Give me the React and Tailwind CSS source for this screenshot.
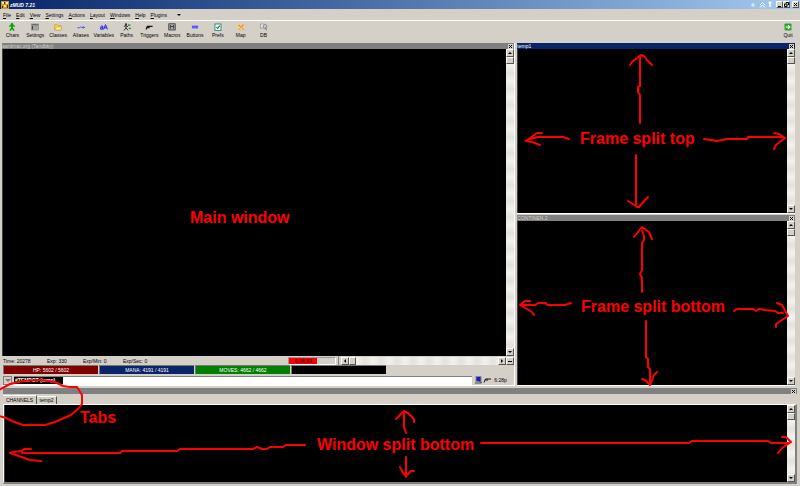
import React from "react";

const menus = ["File", "Edit", "View", "Settings", "Actions", "Layout", "Windows", "Help", "Plugins"];

function Glyph({ name }) {
  const common = { width: 8, height: 8, viewBox: "0 0 8 8", "aria-hidden": true };
  switch (name) {
    case "Chars":
      return (
        <svg {...common}>
          <circle cx="4" cy="1.2" r="1.2" fill="#00a000" />
          <path d="M1.2 3.4 4 2.4l2.8 1M4 2.4V5M4 4.6 2 7.6M4 4.6l2 3" stroke="#00a000" strokeWidth="1.5" fill="none" />
        </svg>
      );
    case "Settings":
      return (
        <svg {...common}>
          <rect x=".5" y="1" width="7" height="6" fill="#b4b4b4" stroke="#777" strokeWidth=".6" />
          <path d="M1 1.8h6" stroke="#555" />
          <path d="M1.6 3v3.4" stroke="#444" strokeWidth="1.2" />
          <path d="M3.6 3.6h3M3.6 5.3h3" stroke="#888" strokeWidth=".7" />
        </svg>
      );
    case "Classes":
      return (
        <svg {...common}>
          <path d="M.6 7V1.6h2.6l.8 1h3V7z" fill="#f4d84c" stroke="#b89a28" strokeWidth=".6" />
          <path d="M.8 7 2 4h5.8L6.8 7z" fill="#fff09a" stroke="#b89a28" strokeWidth=".5" />
        </svg>
      );
    case "Aliases":
      return (
        <svg {...common}>
          <path d="M.6 4.8h2M2.8 4.6c.4-1 1.6-1 1.8 0M5 4.4h2.4M6.4 3.4l1 1-1 1" stroke="#3b3bf0" strokeWidth=".9" fill="none" />
        </svg>
      );
    case "Variables":
      return (
        <svg {...common}>
          <path d="M.6 3.2h2.2v3H.6V4.6h2M3.6 6.4 5.5 1.6l1.9 4.8M4.3 4.8h2.4" stroke="#2020f0" strokeWidth="1" fill="none" />
        </svg>
      );
    case "Paths":
      return (
        <svg {...common}>
          <circle cx="3" cy="1.3" r="1" fill="#222" />
          <path d="M3 2v3L1 7.4M3 4.8l2 2.6M.8 3.4 3 2.6l2 1.2" stroke="#333" fill="none" />
          <path d="M5 2.2h2.4M5.8 5.4h2" stroke="#188018" strokeWidth="1.3" />
        </svg>
      );
    case "Triggers":
      return (
        <svg {...common}>
          <path d="M1 6.6 2.4 3.4h5.2M2.4 4.6h2.2" stroke="#151515" strokeWidth="1.2" fill="none" />
        </svg>
      );
    case "Macros":
      return (
        <svg {...common}>
          <rect x=".8" y=".8" width="6.4" height="6.2" fill="#aaa" stroke="#333" strokeWidth=".8" />
          <path d="M2.4 5.6V2.4L4 4l1.6-1.6v3.2" stroke="#222" strokeWidth=".8" fill="none" />
        </svg>
      );
    case "Buttons":
      return (
        <svg {...common}>
          <rect x="1" y="2.6" width="6" height="3" fill="#4040ee" stroke="#a8a8f8" strokeWidth=".6" />
          <path d="M2.4 4.1h3.2" stroke="#b8b8ff" strokeWidth=".6" />
        </svg>
      );
    case "Prefs":
      return (
        <svg {...common}>
          <rect x="1" y="1" width="6" height="6.4" fill="#fff" stroke="#2b7c8c" strokeWidth=".9" />
          <path d="M2.3 4 3.6 5.4 5.8 2.6" stroke="#109010" strokeWidth="1.1" fill="none" />
        </svg>
      );
    case "Map":
      return (
        <svg {...common}>
          <rect x=".6" y=".8" width="6.8" height="6.4" fill="#f1d28e" />
          <path d="M1 2.4h2v1.8h2.4V2H7M1.4 6.2h2M5 6.2h2" stroke="#dd8735" strokeWidth=".9" fill="none" />
        </svg>
      );
    case "DB":
      return (
        <svg {...common}>
          <rect x=".6" y="1" width="4" height="4" fill="#e8e8e8" stroke="#888" strokeWidth=".6" />
          <circle cx="5" cy="3.4" r="1.8" fill="#c9d7e4" stroke="#667" strokeWidth=".7" />
          <path d="m5.6 4.8.8 2.4" stroke="#667" />
        </svg>
      );
    default:
      return (
        <svg {...common}>
          <rect x=".5" y=".5" width="7" height="7" rx=".8" fill="#2ba52b" />
          <path d="M1.6 4h4M4 2.2 5.9 4 4 5.8" stroke="#fff" strokeWidth="1.1" fill="none" />
        </svg>
      );
  }
}

const tools = ["Chars", "Settings", "Classes", "Aliases", "Variables", "Paths", "Triggers", "Macros", "Buttons", "Prefs", "Map", "DB"];

function Tool({ name }) {
  return (
    <button className="flex min-w-0 flex-1 flex-col items-center">
      <Glyph name={name} />
      <span className="leading-[8px]">{name}</span>
    </button>
  );
}

const raised = "border border-t-white border-l-white border-r-[#555] border-b-[#555] bg-[#d4d0c8]";

function Arrow({ d, label }) {
  return (
    <button aria-label={label} className={`flex h-2 w-2 shrink-0 items-center justify-center ${raised}`}>
      <svg width="4" height="4" viewBox="0 0 4 4" aria-hidden="true"><path d={d} fill="#000" /></svg>
    </button>
  );
}

function VScroll() {
  return (
    <div className="flex w-2 shrink-0 flex-col bg-[repeating-linear-gradient(180deg,#f3f2ef_0px,#e4e1dc_8px,#f3f2ef_16px)]">
      <Arrow label="Scroll up" d="M0 3h4L2 1z" />
      <div className={`h-[7px] ${raised}`} />
      <div className="flex-1" />
      <Arrow label="Scroll down" d="M0 1h4L2 3z" />
    </div>
  );
}

function CloseBox() {
  return (
    <button aria-label="Close" className="flex h-[5px] w-[5px] shrink-0 items-center justify-center bg-[#d4d0c8]">
      <svg width="5" height="5" viewBox="0 0 5 5" aria-hidden="true"><path d="M1 1l3 3M4 1 1 4" stroke="#000" /></svg>
    </button>
  );
}

function PaneTitle({ text, tone }) {
  return (
    <div className={`flex h-[6px] shrink-0 items-center justify-between pr-px leading-[6px] ${tone}`}>
      <span>{text}</span>
      <CloseBox />
    </div>
  );
}

function Frame({ title, tone }) {
  return (
    <section className="flex flex-1 flex-col border-b border-white">
      <PaneTitle text={title} tone={tone} />
      <div className="flex flex-1">
        <div className="flex-1 border-l border-[#404040] bg-black" />
        <VScroll />
      </div>
    </section>
  );
}

function Gauge({ color, text }) {
  return (
    <div className={`flex h-[9px] w-[95px] items-center justify-center border-t border-l border-[#777] text-white ${color}`}>{text}</div>
  );
}

const strokes = [
  // upper frame
  "M569 139 563 137H538L530 139 526 141M542 133H537L530 138 526 141 532 142 540 145",
  "M704 139 717 141 727 139H747L748 137H783M774 133 779 134 785 138 776 145 774 149",
  "M640 123V95L638 92V87L640 86V56M630 65 632 62 641 55 644 56 647 60 652 65",
  "M636 155V204M628 201 633 204 637 207H639L645 200 648 197",
  // lower frame
  "M571 303 565 305H547L546 303H538L535 305H520M530 301H525L520 305 532 312 534 315",
  "M734 311 737 309H753L756 311 759 309 765 310 775 311 778 313H783M777 303 782 305 788 316 776 324V327",
  "M642 292V278L640 274 642 270V243L644 240V236L642 231M634 237 642 227 649 232 652 239",
  "M646 321V357L648 359V367L650 369V383M642 379 645 380 650 385 654 375 657 372",
  // bottom window
  "M31 449H24L22 451 13 452 10 453 30 460 41 461M22 453H120L122 451H177L180 449H253L257 447 262 449H267L270 447H283L286 445H305",
  "M406 433 404 427V413M396 419 404 411 408 413 414 419V422",
  "M406 457V477M400 467 403 473 406 476 411 471H414",
  "M481 443H689L692 441H768L771 443H788M782 437H786L791 442 782 448 778 453",
  // loop round the tabs
  "M-1 390 10 384 23 381 40 380 55 382 63 386 70 387H77L82 395V404L78 409 71 415 55 422 45 425H23L12 421 6 418-1 416",
];

function Annotations() {
  return (
    <svg viewBox="0 0 800 486" className="pointer-events-none absolute inset-0 h-full w-full">
      <g fill="none" stroke="#f00" strokeWidth="2" strokeLinejoin="round" strokeLinecap="round">
        {strokes.map((d) => <path key={d} d={d} />)}
      </g>
      <g fill="#f00" className="text-[16px] font-bold">
        <text x="190" y="223">Main window</text>
        <text x="580" y="144">Frame split top</text>
        <text x="581" y="312">Frame split bottom</text>
        <text x="317" y="450">Window split bottom</text>
        <text x="80" y="423">Tabs</text>
      </g>
    </svg>
  );
}

export default function App() {
  return (
    <div className="relative flex min-h-screen flex-col overflow-hidden bg-[#d4d0c8] font-['Liberation_Sans',Arial,sans-serif] text-[5px] leading-[6px] text-black">
      <header className="flex h-[9px] shrink-0 items-center bg-linear-to-r from-[#0a246a] to-[#a6caf0] pr-px pl-px text-white">
        <svg width="8" height="8" viewBox="0 0 8 8" aria-hidden="true">
          <rect width="8" height="8" fill="#c99b25" />
          <path d="M1 1h2v2H1zM5 1h2v2H5zM3 4h2v2H3z" fill="#ffed80" />
          <path d="M3 1h1v2H3zM1 5h1v2H1zM6 4h1v3H6z" fill="#4b2f10" />
        </svg>
        <h1 className="ml-px flex-1 font-bold italic">zMUD 7.21</h1>
        <svg className="mr-[2px]" width="24" height="7" viewBox="0 0 24 7" fill="none" stroke="#fff" aria-hidden="true">
          <path d="M3 2v4M1 4h4" strokeWidth=".8" />
          <path d="m10 4 2.5-2.5L15 4M10 6.5 12.5 4 15 6.5" />
          <path d="M20 6V2M18.5 1.5h3" strokeWidth="1.5" />
        </svg>
        <button aria-label="Minimize" className={`h-[7px] w-[7px] ${raised}`}>
          <svg width="5" height="5" viewBox="0 0 5 5" aria-hidden="true"><path d="M1 4.5h3" stroke="#000" /></svg>
        </button>
        <button aria-label="Restore" className={`h-[7px] w-[7px] ${raised}`}>
          <svg width="5" height="5" viewBox="0 0 5 5" aria-hidden="true"><path d="M2 .5h2.5V3M.5 2H3v2.5H.5z" stroke="#000" fill="none" /></svg>
        </button>
        <button aria-label="Close window" className={`ml-[2px] h-[7px] w-[7px] ${raised}`}>
          <svg width="5" height="5" viewBox="0 0 5 5" aria-hidden="true"><path d="m1 1 3 3M4 1 1 4" stroke="#000" /></svg>
        </button>
      </header>

      <nav className="flex h-3 shrink-0 items-center gap-[5px] border-b border-white pl-[3px]">
        {menus.map((m) => (
          <button key={m}><span className="underline">{m[0]}</span>{m.slice(1)}</button>
        ))}
        <svg className="ml-[5px]" width="4" height="4" viewBox="0 0 4 4" aria-hidden="true"><path d="M0 1h4L2 3z" /></svg>
      </nav>

      <div className="flex h-[22px] shrink-0 justify-between pt-[2px] pr-px pl-px">
        <div className="flex w-[274px]">
          {tools.map((t) => <Tool key={t} name={t} />)}
        </div>
        <div className="flex w-[22px]"><Tool name="Quit" /></div>
      </div>

      <main className="flex flex-1 gap-[2px] pr-[5px] pl-[2px]">
        <section className="flex flex-[513] flex-col border-r border-b border-white">
          <PaneTitle text="aardmac.org (Tandbky)" tone="bg-[#808080] text-[#d4d0c8]" />
          <div className="flex flex-1">
            <div className="flex-1 border-l border-[#404040] bg-black" />
            <VScroll />
          </div>
          <div className="flex h-[9px] shrink-0 items-center pl-px">
            <span className="w-[44px]">Time: 20278</span>
            <span className="w-[36px]">Exp: 330</span>
            <span className="w-[40px]">Exp/Min: 0</span>
            <span className="flex-1">Exp/Sec: 0</span>
            <div className="flex h-[8px] w-[48px] border border-t-[#999] border-l-[#999] border-r-white border-b-white">
              <span className="w-[28px] bg-[#f00] text-center leading-[6px]">0:06:39</span>
            </div>
            <div className="mx-[2px] h-full w-px bg-[#808080]" />
            <div className="flex h-2 w-[165px] bg-[repeating-linear-gradient(90deg,#f3f2ef_0px,#e4e1dc_8px,#f3f2ef_16px)]">
              <Arrow label="Scroll left" d="M3 0v4L1 2z" />
              <div className={`w-[7px] ${raised}`} />
              <div className="flex-1" />
              <Arrow label="Scroll right" d="M1 0v4l2-2z" />
            </div>
            <Arrow label="Split view" d="M0 2h4v1H0z" />
          </div>
          <div className="flex h-[10px] shrink-0 gap-px pl-px">
            <Gauge color="bg-[#800000]" text="HP: 5602 / 5602" />
            <Gauge color="bg-[#0a246a]" text="MANA: 4191 / 4191" />
            <Gauge color="bg-[#008000]" text="MOVES: 4662 / 4662" />
            <Gauge color="bg-black" text="" />
          </div>
          <div className="flex h-[10px] shrink-0 items-center gap-[2px] pl-px">
            <button aria-label="Command history" className="flex h-[9px] w-[9px] items-center justify-center border border-[#808080] bg-[#d4d0c8]">
              <svg width="6" height="4" viewBox="0 0 6 4" aria-hidden="true"><path d="M0 1h6L3 4z" fill="#777" /></svg>
            </button>
            <div className="flex h-[9px] flex-1 items-center border-t border-[#808080] bg-white">
              <span className="h-[7px] w-[49px] bg-black pl-px font-bold leading-[7px] text-white">#TEMPOT (temp)</span>
              <input aria-label="Command" className="h-[7px] min-w-0 flex-1 outline-none" />
            </div>
            <svg width="18" height="8" viewBox="0 0 18 8" aria-hidden="true">
              <rect x="2" y=".5" width="5" height="5" fill="#1818d0" stroke="#888" />
              <path d="M1 7h6M5 5l3 2" stroke="#444" />
              <path d="M10 6.5 11.5 3H17M11.5 4H14" stroke="#111" fill="none" />
            </svg>
            <span className="w-[20px]">6:28p</span>
          </div>
        </section>

        <div className="flex flex-[278] flex-col gap-px">
          <Frame title="temp1" tone="bg-[#0a246a] text-white" />
          <Frame title="CONTINEN 2" tone="bg-[#808080] text-[#d4d0c8]" />
        </div>
      </main>

      <section className="mt-[2px] mr-[3px] ml-[3px] flex h-[98px] shrink-0 flex-col pb-[2px]">
        <div className="flex h-[6px] shrink-0 items-center justify-end bg-[#808080] pr-px"><CloseBox /></div>
        <div role="tablist" className="flex h-[10px] shrink-0 items-end">
          <button role="tab" aria-selected="true" className="h-[9px] w-[34px] border-t border-r border-t-white border-r-[#555] text-center leading-[7px]">CHANNELS</button>
          <button role="tab" aria-selected="false" className="h-2 w-[20px] border-t border-r border-t-white border-r-[#555] text-center leading-[7px]">temp2</button>
        </div>
        <div className="flex flex-1 border border-r-2 border-b-2 border-t-white border-l-white border-r-[#808080] border-b-[#808080]">
          <div className="flex-1 border-l border-[#404040] bg-black" />
          <VScroll />
        </div>
      </section>

      <Annotations />
    </div>
  );
}
